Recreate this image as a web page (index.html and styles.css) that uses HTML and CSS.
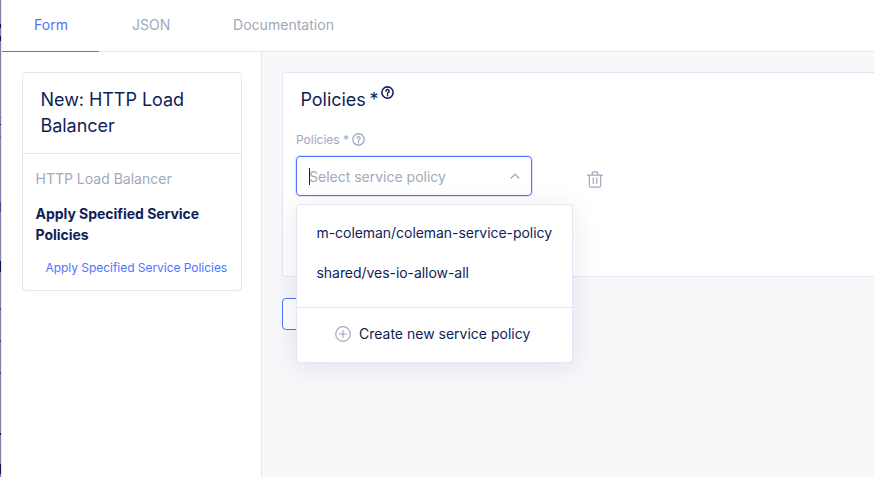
FILE: index.html
```html
<!DOCTYPE html>
<html lang="en">
<head>
<meta charset="utf-8">
<title>HTTP Load Balancer</title>
<link rel="stylesheet" href="styles.css">
</head>
<body>
<div class="backdrop-edge"></div>
<div class="drawer">
  <nav class="tabs">
    <a class="tab tab-form active">Form</a>
    <a class="tab tab-json">JSON</a>
    <a class="tab tab-docs">Documentation</a>
  </nav>
  <div class="body">
    <aside class="sidebar">
      <div class="outline">
        <h2 class="outline-title"><span>New: HTTP Load Balancer</span></h2>
        <div class="outline-body">
          <div class="crumb"><span>HTTP Load Balancer</span></div>
          <div class="section"><span>Apply Specified Service Policies</span></div>
          <div class="link"><span>Apply Specified Service Policies</span></div>
        </div>
      </div>
    </aside>
    <main class="content">
      <section class="card">
        <h3 class="card-title"><span>Policies *</span>
          <svg class="help" viewBox="0 0 12 12"><circle cx="6" cy="6" r="5.2"/><path d="M4.6 4.8a1.45 1.45 0 1 1 2.1 1.25c-.5.25-.7.45-.7.95M6 8.2v.9"/></svg>
        </h3>
        <div class="label"><span>Policies *</span>
          <svg class="help" viewBox="0 0 12 12"><circle cx="6" cy="6" r="5.3"/><path d="M4.6 4.8a1.45 1.45 0 1 1 2.1 1.25c-.5.25-.7.45-.7.95M6 8.2v.9"/></svg>
        </div>
        <div class="row">
          <div class="select">
            <i class="caret"></i><span class="placeholder">Select service policy</span>
            <svg class="chevron" viewBox="0 0 10 6"><path d="M1.2 5 5 1.2 8.8 5"/></svg>
            <div class="menu">
              <div class="options">
                <div class="option"><span>m-coleman/coleman-service-policy</span></div>
                <div class="option"><span>shared/ves-io-allow-all</span></div>
              </div>
              <div class="create">
                <svg class="plus" viewBox="0 0 16 16"><circle cx="8" cy="8" r="7.3"/><path d="M8 4.5v7M4.5 8h7"/></svg>
                <span>Create new service policy</span>
              </div>
            </div>
          </div>
          <svg class="trash" viewBox="0 0 16 17"><path d="M.5 4.1h15M5.3 4V1.2h5.4V4M2.3 4.3v10q0 1.9 1.9 1.9h7.6q1.9 0 1.9-1.9v-10M6.3 7v5.5M9.7 7v5.5"/></svg>
        </div>
      </section>
      <button class="add" aria-label="Add item"></button>
    </main>
  </div>
</div>
</body>
</html>
```
FILE: styles.css
```css
* { box-sizing: border-box; }
body {
  margin: 0;
  height: 477px;
  display: flex;
  overflow: hidden;
  font-family: Inter, "Liberation Sans", sans-serif;
  font-size: 14px;
  color: #0f1e57;
  background: #fff;
}
.backdrop-edge {
  width: 2px;
  flex: none;
  border-right: 1px solid #e4e5f2;
  background: linear-gradient(#8185ab 24px, #0f1550 24px 28px, #8185ab 28px 36px, #0f1550 36px 41px, #8185ab 41px 117px, #4a5085 117px 118px, #8185ab 118px 124px, #0f1550 124px 125px, #8185ab 125px 136px, #62689a 136px 138px, #8185ab 138px 202px, #4a5085 202px 212px, #8185ab 212px 261px, #0f1550 261px 272px, #8185ab 272px 308px, #4a5085 308px 310px, #8185ab 310px 340px, #4a5085 340px 342px, #8185ab 342px 372px, #4a5085 372px 374px, #8185ab 374px 433px, #0f1550 433px 435px, #8185ab 435px 464px, #0f1550 464px 474px, #8185ab 474px);
}
.drawer { flex: 1; min-width: 0; display: flex; flex-direction: column; }
.tabs { display: flex; height: 52px; border-bottom: 1px solid #e4e6f2; flex: none; }
.tab {
  height: 52px;
  padding: 0 32px;
  line-height: 50px;
  letter-spacing: .03px;
  color: #a0a9ba;
  white-space: nowrap;
}
.tab-form { width: 97px; }
.tab-json { width: 102px; padding-left: 33px; }
.active { color: #4f73ff; border-bottom: 1px solid #4f73ff; }
.body { flex: 1; display: flex; min-height: 0; }
.sidebar { width: 260px; flex: none; padding: 20px 19px 0 20px; border-right: 1px solid #e4e6f2; }
.outline { height: 219px; border: 1px solid #e4e6f2; border-radius: 4px; }
.outline-title {
  margin: 0;
  height: 81px;
  padding: 14px 30px 0 17.5px;
  border-bottom: 1px solid #e4e6f2;
  font-size: 18px;
  line-height: 26px;
  font-weight: 400;
  letter-spacing: -.05px;
}
.outline-body { padding: 14px 0 0 12.5px; white-space: nowrap; }
.crumb { line-height: 21px; color: #a0a9ba; }
.section { width: 185px; margin-top: 14px; white-space: normal; line-height: 21px; font-weight: 700; letter-spacing: -.03px; }
.link { margin: 14px 0 0 10px; font-size: 12px; line-height: 18px; color: #4f73ff; letter-spacing: -.04px; }
.content { flex: 1; min-width: 0; padding: 20px 0 0 20px; background: #f7f8fa; }
.card { height: 205px; border: 1px solid #e4e6f2; border-right: 0; border-radius: 4px 0 0 4px; background: #fff; padding: 14px 0 0 13px; }
.card-title { margin: 0; padding-left: 4.5px; height: 26px; display: flex; font-size: 18px; line-height: 26px; font-weight: 400; letter-spacing: -.05px; word-spacing: -1.2px; }
.help { width: 13px; height: 13px; margin-left: 3px; }
svg { flex: none; fill: none; stroke: currentColor; stroke-width: 1.2; stroke-linecap: round; stroke-linejoin: round; }
.card-title .help { stroke-width: 1.4; margin-top: -1px; }
.label { display: flex; align-items: center; height: 16px; margin-top: 19px; font-size: 12px; line-height: 16px; letter-spacing: 0; color: #a0a9ba; }
.label .help { margin-top: -2px; }
.row { display: flex; align-items: flex-start; margin-top: 8px; }
.select {
  position: relative;
  width: 236px;
  height: 40px;
  display: flex;
  align-items: center;
  padding: 0 11px 0 12px;
  border: 1px solid #4f73ff;
  border-radius: 4px;
  box-shadow: 0 0 0 1px #dfe5ff;
  line-height: 20px;
}
.caret { width: 1px; height: 17px; background: #0f1e57; margin-right: -1px; }
.placeholder { flex: 1; padding-top: 2px; color: #a0a9ba; }
.chevron { width: 10px; height: 6px; color: #98a2b5; }
.trash { width: 16px; height: 17px; margin: 15px 0 0 55px; color: #a0a9ba; }
.menu {
  position: absolute;
  z-index: 1;
  top: 47px;
  left: -1px;
  width: 277px;
  height: 159px;
  background: #fff;
  border: 1px solid #e4e6f2;
  border-radius: 4px;
  box-shadow: 0 4px 28px rgba(15, 30, 87, .1);
  white-space: nowrap;
}
.options { height: 103px; padding: 8px 0 0 19.5px; border-bottom: 1px solid #e4e6f2; letter-spacing: -.05px; }
.option { height: 40px; line-height: 40px; }
.create { height: 52px; display: flex; align-items: center; gap: 8px; padding-left: 38px; }
.plus { width: 16px; height: 16px; color: #a0a9ba; }
.add { display: block; width: 120px; height: 32px; margin: 21px 0 0; border: 1px solid #4f73ff; border-radius: 4px; background: #fff; }
```
